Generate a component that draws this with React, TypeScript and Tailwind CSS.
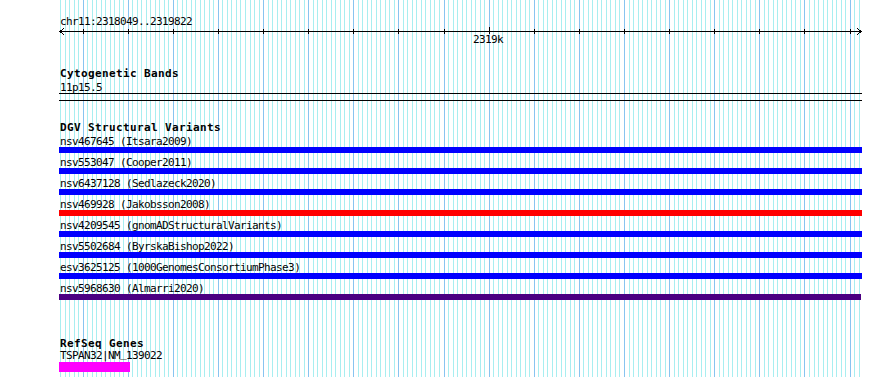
import React from 'react';

type Variant = { id: string; study: string; color: string; width: string };

const VARIANTS: Variant[] = [
  { id: 'nsv467645', study: 'Itsara2009', color: 'bg-[#0000ff]', width: 'w-[803px]' },
  { id: 'nsv553047', study: 'Cooper2011', color: 'bg-[#0000ff]', width: 'w-[803px]' },
  { id: 'nsv6437128', study: 'Sedlazeck2020', color: 'bg-[#0000ff]', width: 'w-[803px]' },
  { id: 'nsv469928', study: 'Jakobsson2008', color: 'bg-[#ff0000]', width: 'w-[803px]' },
  { id: 'nsv4209545', study: 'gnomADStructuralVariants', color: 'bg-[#0000ff]', width: 'w-[803px]' },
  { id: 'nsv5502684', study: 'ByrskaBishop2022', color: 'bg-[#0000ff]', width: 'w-[803px]' },
  { id: 'esv3625125', study: '1000GenomesConsortiumPhase3', color: 'bg-[#0000ff]', width: 'w-[803px]' },
  { id: 'nsv5968630', study: 'Almarri2020', color: 'bg-[#4b0082]', width: 'w-[802px]' },
];

const STEP = 4.512;
const gridX = (k: number) => Math.round(60 + STEP * k);

// vertical guide lines behind every track
const Grid: React.FC = () => {
  const lines = [];
  for (let k = 0; k < 178; k++) {
    const major = k % 10 === 5;
    lines.push(
      <rect key={k} x={gridX(k)} y={0} width={1} height={377} fill={major ? '#88c4f0' : '#a8eef0'} />
    );
  }
  return (
    <svg className="absolute inset-0" width={890} height={377} shapeRendering="crispEdges">
      {lines}
    </svg>
  );
};

const Ruler: React.FC = () => {
  const ticks = [];
  for (let j = 0; j < 18; j++) {
    const x = gridX(5 + 10 * j) - 59;
    const major = j === 9;
    ticks.push(
      <rect key={j} x={x} y={major ? 0 : 2} width={1} height={major ? 7 : 5} fill="#000" />
    );
  }
  return (
    <div className="relative h-[20px]">
      <svg width={803} height={12} className="block" shapeRendering="crispEdges">
        <rect x={1} y={4} width={801} height={1} fill="#000" />
        {ticks}
        <polyline points="5,1 1,4.5 5,8" fill="none" stroke="#000" strokeWidth={1} />
        <polyline points="798,1 802,4.5 798,8" fill="none" stroke="#000" strokeWidth={1} />
      </svg>
      <div className="absolute left-[414px] top-[7px] leading-[11px] tracking-[-0.62px]">2319k</div>
    </div>
  );
};

const Title: React.FC<{ children: React.ReactNode }> = ({ children }) => (
  <div className="font-bold leading-[11px] tracking-[0.38px]">{children}</div>
);

const Label: React.FC<{ children: React.ReactNode; className?: string }> = ({ children, className = '' }) => (
  <div className={`relative leading-[11px] tracking-[-0.62px] whitespace-nowrap ${className}`}>{children}</div>
);

const App: React.FC = () => {
  return (
    <div className="relative w-[890px] h-[377px] overflow-hidden bg-white text-black text-[11px] font-['DejaVu_Sans_Mono',monospace]">
      <Grid />

      <div className="relative ml-[59px] w-[803px] pt-[16px] flex flex-col">
        <div className="pl-px">
          <Label>chr11:2318049..2319822</Label>
        </div>
        <Ruler />

        <section className="mt-[21px] pl-px">
          <Title>Cytogenetic Bands</Title>
          <Label className="mt-[3px]">11p15.5</Label>
        </section>
        <div className="h-px bg-black" />
        <div className="h-px bg-black mt-[6px]" />

        <section className="mt-[21px]">
          <div className="pl-px">
            <Title>DGV Structural Variants</Title>
          </div>
          <div className="mt-[3px] flex flex-col gap-[4px]">
            {VARIANTS.map(v => (
              <div key={v.id} className="relative">
                <div className="pl-px">
                  <Label>{v.id} ({v.study})</Label>
                </div>
                <div className={`h-[6px] ${v.width} ${v.color}`} />
              </div>
            ))}
          </div>
        </section>

        <section className="mt-[38px]">
          <div className="pl-px">
            <Title>RefSeq Genes</Title>
            <Label className="mt-px z-10">
              TSPAN32|NM<span className="relative -top-[2px]">_</span>139022
            </Label>
          </div>
          <div className="mt-px h-[10px] w-[71px] bg-[#ff00ff]" />
        </section>
      </div>
    </div>
  );
};

export default App;
